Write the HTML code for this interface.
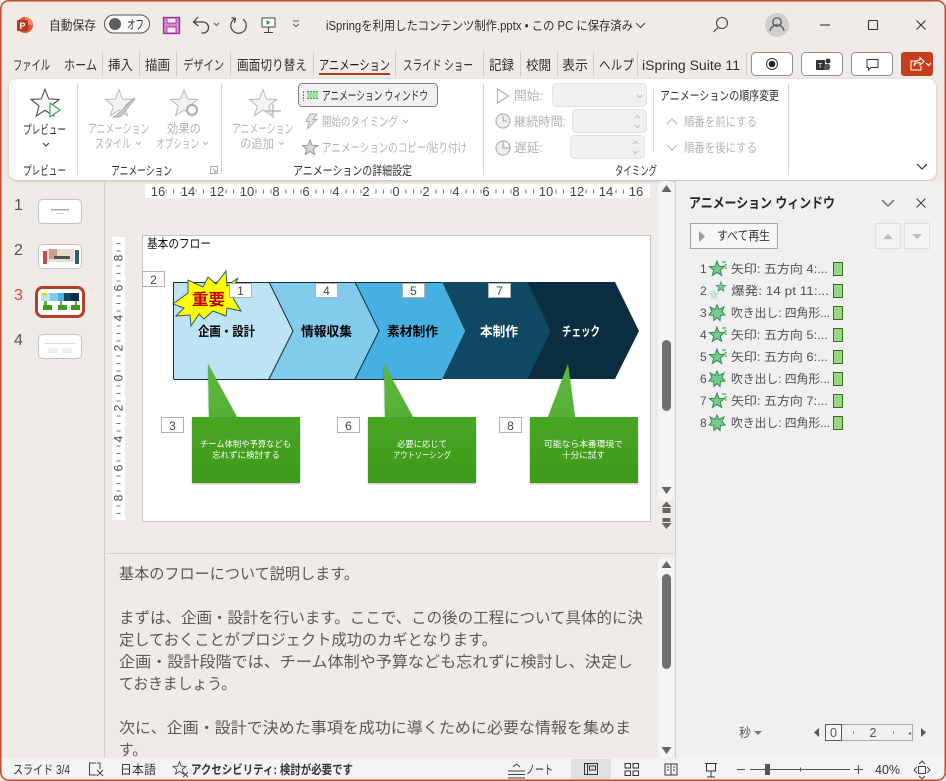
<!DOCTYPE html>
<html lang="ja"><head><meta charset="utf-8"><title>PowerPoint</title>
<style>
html,body{margin:0;padding:0;background:#f0ebe6;overflow:hidden}
svg{display:block}
text{font-family:"Liberation Sans","Noto Sans CJK JP",sans-serif;fill:#303030;font-size:12.5px;white-space:pre}
.g text,text.g{fill:#b4b4b4}
.n text{font-size:15.5px;fill:#5a5a5a}
.r text{font-size:12px;fill:#505050}
.tb text{font-size:13.5px}
</style></head><body>
<svg width="946" height="781" viewBox="0 0 946 781" xmlns="http://www.w3.org/2000/svg">
<defs>
<polygon id="star" points="0,-8 2,-2.75 7.6,-2.47 3.2,1.05 4.7,6.47 0,3.4 -4.7,6.47 -3.2,1.05 -7.6,-2.47 -2,-2.75"/>
<g id="a1"><use href="#star" fill="#79c98d" stroke="#2f8f55" stroke-width="1"/><path d="M5-7h4M7-4h3M8-1h2" stroke="#2f8f55" stroke-width="1"/></g>
<g id="a3"><polygon points="0,-8 2,-3.5 7,-6 5,-1.5 8,2 3.5,2.5 3,7.5 0,4.5 -3,7.5 -3.5,2.5 -8,2 -5,-1.5 -7,-6 -2,-3.5" fill="#79c98d" stroke="#2f8f55" stroke-width="1"/></g>
<linearGradient id="gb" x1="0" y1="0" x2="0" y2="1"><stop offset="0" stop-color="#4fae2e"/><stop offset="1" stop-color="#3f9a19"/></linearGradient>
<linearGradient id="gp" x1="0" y1="0" x2="0" y2="1"><stop offset="0" stop-color="#5fb641"/><stop offset="1" stop-color="#55b035"/></linearGradient>
<filter id="sh" x="-10%" y="-10%" width="120%" height="120%"><feDropShadow dx="0" dy="1" stdDeviation="1" flood-color="#000" flood-opacity=".28"/></filter>
<filter id="rs" x="-3%" y="-10%" width="106%" height="120%"><feDropShadow dx="0" dy="1" stdDeviation="1.5" flood-color="#000" flood-opacity=".22"/></filter>
</defs>

<!-- window -->
<rect width="946" height="781" fill="#f0ebe6"/>

<!-- title bar -->
<circle cx="25" cy="25" r="8" fill="#e0532f"/><path d="M25 17a8 8 0 0 1 8 8h-8z" fill="#ef8a6a"/>
<rect x="17" y="20" width="11" height="11" rx="1" fill="#b7391c"/>
<text x="19.500" y="29" style="fill:#fff;font-size:9px;font-weight:700">P</text>
<text x="49" y="30" textLength="47" lengthAdjust="spacingAndGlyphs" style="font-size:13px">自動保存</text>
<rect x="104.500" y="15" width="45" height="18" rx="9" fill="#fafafa" stroke="#555"/>
<circle cx="115" cy="24" r="6" fill="#5f5f5f"/>
<text x="127" y="29" textLength="17" lengthAdjust="spacingAndGlyphs">オフ</text>
<path d="M163.500 17.500h16v16h-16z" fill="#d08ad0" stroke="#9a2b9a" stroke-width="1.300"/><rect x="167" y="18" width="9" height="5" fill="#f6e6f6" stroke="#9a2b9a" stroke-width=".8"/><rect x="167" y="27" width="9" height="6" fill="#f6e6f6" stroke="#9a2b9a" stroke-width=".8"/>
<path d="M198 17l-4.500 5 5 4M193.500 22h9a5.500 5.500 0 0 1 1 11h-2" fill="none" stroke="#444" stroke-width="1.300"/>
<path d="M214 23l2.500 2.500 2.500-2.500" fill="none" stroke="#555"/>
<path d="M235.500 18.500a7.700 7.700 0 1 0 7.500 .8M231.500 17.500l4 1-1 4.500" fill="none" stroke="#444" stroke-width="1.200"/>
<rect x="262" y="18" width="13" height="9" fill="#fff" stroke="#444"/><path d="M266.500 20v5l4-2.500z" fill="#2f9e44"/><path d="M268.500 27v6M264 32.500h9" stroke="#444" fill="none"/>
<path d="M293 21h6M293 24l3 2.500 3-2.500" fill="none" stroke="#555"/>
<text x="326" y="30" textLength="307" lengthAdjust="spacingAndGlyphs" style="font-size:12.500px">iSpringを利用したコンテンツ制作.pptx • この PC に保存済み</text>
<path d="M636 23l4.500 4.500 4.500-4.500" fill="none" stroke="#444" stroke-width="1.100"/>
<circle cx="722" cy="23" r="5.500" fill="none" stroke="#444" stroke-width="1.100"/><path d="M718 27.500l-4.500 4.500" stroke="#444" stroke-width="1.200"/>
<circle cx="777" cy="25" r="12" fill="#cfcfcf"/><circle cx="777" cy="22" r="4.200" fill="none" stroke="#555" stroke-width="1.200"/><path d="M770 31c1-8 13-8 14 0" fill="none" stroke="#555" stroke-width="1.200"/>
<path d="M820 25h10" stroke="#333" stroke-width="1.100"/>
<rect x="868.500" y="20.500" width="9" height="9" rx="1" fill="none" stroke="#333" stroke-width="1.100"/>
<path d="M916.500 20.500l9 9M925.500 20.500l-9 9" stroke="#333" stroke-width="1.100"/>

<!-- tabs -->
<g class="tb">
<text x="13" y="70" textLength="37" lengthAdjust="spacingAndGlyphs">ファイル</text>
<text x="64" y="70" textLength="33" lengthAdjust="spacingAndGlyphs">ホーム</text>
<text x="108" y="70" textLength="25" lengthAdjust="spacingAndGlyphs">挿入</text>
<text x="145" y="70" textLength="25" lengthAdjust="spacingAndGlyphs">描画</text>
<text x="183" y="70" textLength="41" lengthAdjust="spacingAndGlyphs">デザイン</text>
<text x="237" y="70" textLength="70" lengthAdjust="spacingAndGlyphs">画面切り替え</text>
<text x="319" y="70" textLength="71" lengthAdjust="spacingAndGlyphs" style="fill:#222">アニメーション</text>
<text x="403" y="70" textLength="70" lengthAdjust="spacingAndGlyphs">スライド ショー</text>
<text x="489" y="70" textLength="25" lengthAdjust="spacingAndGlyphs">記録</text>
<text x="526" y="70" textLength="25" lengthAdjust="spacingAndGlyphs">校閲</text>
<text x="562" y="70" textLength="26" lengthAdjust="spacingAndGlyphs">表示</text>
<text x="599" y="70" textLength="35" lengthAdjust="spacingAndGlyphs">ヘルプ</text>
<text x="642" y="70" textLength="98" lengthAdjust="spacingAndGlyphs">iSpring Suite 11</text>
</g>
<rect x="319" y="73" width="71" height="2" fill="#b7391c"/>
<g stroke="#d2cec9" stroke-width="1">
<path d="M102.500 52v24M139.500 52v24M176.500 52v24M230.500 52v24M313.500 52v24M395.500 52v24M483.500 52v24M520.500 52v24M557.500 52v24M593.500 52v24M637.500 52v24M746.500 52v24"/>
</g>
<g fill="#fff" stroke="#8f8f8f"><rect x="751.500" y="52.500" width="41" height="23" rx="4"/><rect x="801.500" y="52.500" width="41" height="23" rx="4"/><rect x="851.500" y="52.500" width="41" height="23" rx="4"/></g>
<circle cx="772" cy="64" r="5.500" fill="none" stroke="#333"/><circle cx="772" cy="64" r="3.300" fill="#222"/>
<rect x="816" y="60" width="9" height="10" rx="1" fill="#333"/><circle cx="828" cy="61" r="2.500" fill="#333"/><rect x="824" y="64" width="6" height="6" rx="2" fill="#555"/><text x="818" y="68" style="font-size:7px;fill:#fff">T</text>
<path d="M867 59.500h11v8h-7l-2.500 2.500v-2.500h-1.500z" fill="none" stroke="#333"/>
<rect x="901" y="52" width="32" height="24" rx="3" fill="#c43e1c"/>
<path d="M918 61h-7v9h10v-4M914 66c0-4 3-6 6-6v-2.500l4 4-4 3.500v-2.500c-3 0-5 1-6 3.500z" fill="none" stroke="#fff" stroke-width="1"/>
<path d="M926 63l2.500 2.500 2.500-2.500" fill="none" stroke="#fff" stroke-width="1.200"/>

<!-- ribbon -->
<rect x="9" y="79" width="927" height="101" rx="8" fill="#fff" filter="url(#rs)"/>
<path d="M77.500 84v90M221.500 84v90M483.500 84v90M653.500 90v62M788.500 84v90" stroke="#d4d4d4"/>

<use href="#star" transform="translate(45 104) scale(1.850)" fill="#fafafa" stroke="#444" stroke-width=".55"/>
<path d="M50 103v14l10-7z" fill="#fff" stroke="#3da35a" stroke-width="1.200"/>
<text x="23" y="134" textLength="43" lengthAdjust="spacingAndGlyphs">プレビュー</text>
<path d="M43 143l3 3 3-3" fill="none" stroke="#333" stroke-width="1.100"/>
<text x="23" y="175" textLength="43" lengthAdjust="spacingAndGlyphs">プレビュー</text>

<g class="g">
<use href="#star" transform="translate(119 104) scale(1.800)" fill="#f3f3f3" stroke="#b8b8b8" stroke-width=".55"/>
<path d="M134 98l-14 14c-2 2-3 3-7 5 5 1 8 0 10-3l12-15z" fill="#c9c9c9" stroke="#aaa" stroke-width=".8"/>
<use href="#star" transform="translate(184 104) scale(1.800)" fill="#f3f3f3" stroke="#b8b8b8" stroke-width=".55"/>
<circle cx="192" cy="110" r="5" fill="#fff" stroke="#b0b0b0" stroke-width="2.200"/>
<use href="#star" transform="translate(263 104) scale(1.800)" fill="#f3f3f3" stroke="#b8b8b8" stroke-width=".55"/>
<path d="M273 104v14M265 111h16" stroke="#b0b0b0" stroke-width="1.200"/>
<text x="88" y="133" textLength="61" lengthAdjust="spacingAndGlyphs">アニメーション</text>
<text x="95" y="148" textLength="36" lengthAdjust="spacingAndGlyphs">スタイル</text>
<path d="M136 142l2.500 2.500 2.500-2.500M203 142l2.500 2.500 2.500-2.500M279 142l2.500 2.500 2.500-2.500M403 120l2.500 2.500 2.500-2.500" fill="none" stroke="#b4b4b4" stroke-width="1.100"/>
<text x="167" y="133" textLength="34" lengthAdjust="spacingAndGlyphs">効果の</text>
<text x="156" y="148" textLength="43" lengthAdjust="spacingAndGlyphs">オプション</text>
<text x="232" y="133" textLength="61" lengthAdjust="spacingAndGlyphs">アニメーション</text>
<text x="240" y="148" textLength="34" lengthAdjust="spacingAndGlyphs">の追加</text>
<path d="M310 114h7l-4 5.500h4l-10 9.500 2.500-7.500h-3.500z" fill="#e3e3e3" stroke="#aaa" stroke-width=".9"/>
<text x="322" y="126" textLength="76" lengthAdjust="spacingAndGlyphs">開始のタイミング</text>
<use href="#star" transform="translate(310 148) scale(1)" fill="#d8d8d8" stroke="#999" stroke-width="1"/>
<text x="322" y="152" textLength="145" lengthAdjust="spacingAndGlyphs">アニメーションのコピー/貼り付け</text>
<path d="M497.500 89v14l11-7z" fill="#fff" stroke="#b4b4b4" stroke-width="1.200"/>
<text x="514" y="100" textLength="29" lengthAdjust="spacingAndGlyphs">開始:</text>
<circle cx="503" cy="121" r="7" fill="#efefef" stroke="#b4b4b4" stroke-width="1.200"/><path d="M503 116v5h4" fill="none" stroke="#a5a5a5"/>
<text x="514" y="126" textLength="52" lengthAdjust="spacingAndGlyphs">継続時間:</text>
<circle cx="503" cy="148" r="7" fill="#efefef" stroke="#b4b4b4" stroke-width="1.200"/><path d="M503 142v6h5M503 141a7 7 0 0 1 7 7h-7z" fill="#fff" stroke="#a5a5a5"/>
<text x="514" y="152" textLength="29" lengthAdjust="spacingAndGlyphs">遅延:</text>
<g fill="#f0f0f0" stroke="#e2e2e2"><rect x="552.500" y="83.500" width="94" height="23" rx="4"/><rect x="572.500" y="109.500" width="74" height="23" rx="4"/><rect x="570.500" y="135.500" width="74" height="23" rx="4"/></g>
<path d="M637 95l2.500 2.500 2.500-2.500M635 118l2.500-2.500 2.500 2.500M635 125l2.500 2.500 2.500-2.500M633 144l2.500-2.500 2.500 2.500M633 151l2.500 2.500 2.500-2.500" fill="none" stroke="#c0c0c0"/>
<path d="M667 124l5-5 5 5M667 145l5 5 5-5" fill="none" stroke="#b8b8b8" stroke-width="1.100"/>
<text x="684" y="126" textLength="73" lengthAdjust="spacingAndGlyphs">順番を前にする</text>
<text x="684" y="152" textLength="73" lengthAdjust="spacingAndGlyphs">順番を後にする</text>
<path d="M210.500 166.500h7v7h-7zM213 169l3 3M216 170v2h-2" fill="none" stroke="#aaa"/>
</g>
<text x="660" y="100" textLength="119" lengthAdjust="spacingAndGlyphs">アニメーションの順序変更</text>
<text x="111" y="175" textLength="61" lengthAdjust="spacingAndGlyphs">アニメーション</text>
<text x="293" y="175" textLength="119" lengthAdjust="spacingAndGlyphs">アニメーションの詳細設定</text>
<text x="615" y="175" textLength="42" lengthAdjust="spacingAndGlyphs">タイミング</text>
<path d="M917 164l5 5 5-5" fill="none" stroke="#333" stroke-width="1.200"/>

<rect x="298.500" y="83.500" width="139" height="23" rx="4" fill="#f0f0f0" stroke="#7d7d7d"/>
<rect x="307" y="92" width="11" height="6" fill="#9fdca8"/><path d="M303.500 91v10M307 91.500h11M307 98.500h11" stroke="#3f9e55" fill="none" stroke-dasharray="2 1"/>
<text x="322" y="100" textLength="106" lengthAdjust="spacingAndGlyphs">アニメーション ウィンドウ</text>

<!-- left pane -->
<path d="M104.500 181v577" stroke="#d2cfcb"/>
<text x="14" y="210" style="font-size:16px;fill:#555">1</text>
<text x="14" y="255" style="font-size:16px;fill:#555">2</text>
<text x="14" y="300" style="font-size:16px;fill:#d9452a">3</text>
<text x="14" y="345" style="font-size:16px;fill:#555">4</text>
<g fill="#fff" stroke="#c4c4c4"><rect x="38.500" y="199.500" width="43" height="24" rx="4"/><rect x="38.500" y="244.500" width="43" height="24" rx="4"/><rect x="38.500" y="334.500" width="43" height="24" rx="4"/></g>
<rect x="51" y="209" width="18" height="1.500" fill="#b5a5a0"/><rect x="56" y="213" width="8" height="1" fill="#c9c9d9"/>
<rect x="46" y="249" width="28" height="13" fill="#e8dccf"/><rect x="49" y="249" width="8" height="10" fill="#c9a184"/><rect x="43" y="251" width="4" height="13" fill="#c0504d"/><rect x="75" y="250" width="4" height="14" fill="#2f5f6f"/><rect x="54" y="256" width="16" height="3" fill="#555"/>
<rect x="44" y="343" width="32" height="1" fill="#ddd"/><rect x="48" y="348" width="10" height="5" fill="#efefef"/><rect x="62" y="348" width="10" height="5" fill="#efefef"/>
<rect x="36.500" y="287.500" width="47" height="29" rx="6" fill="#fff" stroke="#b5402a" stroke-width="3"/>
<rect x="41" y="293" width="10" height="8" fill="#bee3f4"/><rect x="50" y="293" width="9" height="8" fill="#83cbeb"/><rect x="58" y="293" width="7" height="8" fill="#45b0e1"/><rect x="64" y="293" width="8" height="8" fill="#104862"/><rect x="71" y="293" width="8" height="8" fill="#0a2d40"/>
<polygon points="41,295 44,292 47,293 46,296" fill="#f4d800"/>
<rect x="43" y="305" width="9" height="5" fill="#3f9a19"/><rect x="58" y="305" width="9" height="5" fill="#3f9a19"/><rect x="71" y="305" width="9" height="5" fill="#3f9a19"/>
<path d="M44 301h3v4h-3zM60 301h2v4h-2zM75 301h2v4h-2z" fill="#5fb33f"/>

<!-- rulers -->
<rect x="145" y="184" width="505" height="14" fill="#fff"/>
<path d="M158 191.500H636" stroke="#777" stroke-width="4" stroke-dasharray="1 6.500"/>
<g text-anchor="middle">
<g stroke="#fff" stroke-width="3" paint-order="stroke">
<text x="158" y="196" style="font-size:13px;fill:#444">16</text><text x="188" y="196" style="font-size:13px;fill:#444">14</text><text x="217" y="196" style="font-size:13px;fill:#444">12</text><text x="247" y="196" style="font-size:13px;fill:#444">10</text><text x="276" y="196" style="font-size:13px;fill:#444">8</text><text x="306" y="196" style="font-size:13px;fill:#444">6</text><text x="336" y="196" style="font-size:13px;fill:#444">4</text><text x="366" y="196" style="font-size:13px;fill:#444">2</text><text x="396" y="196" style="font-size:13px;fill:#444">0</text><text x="426" y="196" style="font-size:13px;fill:#444">2</text><text x="456" y="196" style="font-size:13px;fill:#444">4</text><text x="486" y="196" style="font-size:13px;fill:#444">6</text><text x="516" y="196" style="font-size:13px;fill:#444">8</text><text x="546" y="196" style="font-size:13px;fill:#444">10</text><text x="577" y="196" style="font-size:13px;fill:#444">12</text><text x="606" y="196" style="font-size:13px;fill:#444">14</text><text x="636" y="196" style="font-size:13px;fill:#444">16</text>
</g></g>
<rect x="112" y="237" width="13" height="283" fill="#fff"/>
<path d="M118.500 243V515" stroke="#777" stroke-width="4" stroke-dasharray="1 6.500"/>
<g text-anchor="middle" stroke="#fff" stroke-width="3" paint-order="stroke">
<text transform="translate(122.500 258) rotate(-90)" style="font-size:12px;fill:#444">8</text>
<text transform="translate(122.500 288) rotate(-90)" style="font-size:12px;fill:#444">6</text>
<text transform="translate(122.500 318) rotate(-90)" style="font-size:12px;fill:#444">4</text>
<text transform="translate(122.500 348) rotate(-90)" style="font-size:12px;fill:#444">2</text>
<text transform="translate(122.500 378) rotate(-90)" style="font-size:12px;fill:#444">0</text>
<text transform="translate(122.500 408) rotate(-90)" style="font-size:12px;fill:#444">2</text>
<text transform="translate(122.500 439) rotate(-90)" style="font-size:12px;fill:#444">4</text>
<text transform="translate(122.500 468) rotate(-90)" style="font-size:12px;fill:#444">6</text>
<text transform="translate(122.500 498) rotate(-90)" style="font-size:12px;fill:#444">8</text>
</g>

<!-- slide -->
<rect x="142.500" y="235.500" width="508" height="286" fill="#fff" stroke="#c6c6c6"/>
<text x="147" y="248" textLength="64" lengthAdjust="spacingAndGlyphs" style="fill:#111">基本のフロー</text>

<polygon points="528,282 615,282 639,331 615,379 528,379 551,331" fill="#0a2d40"/>
<polygon points="442,282 528,282 551,331 528,379 442,379 465,331" fill="#104862"/>
<polygon points="355,282 442,282 465,331 442,379 355,379 379,331" fill="#45b0e1"/>
<polygon points="269,282 355,282 379,331 355,379 269,379 293,331" fill="#83cbeb"/>
<polygon points="173.500,282.500 269,282.500 293,331 269,379 173.500,379" fill="#bee3f4"/>
<path d="M173.500 379V282.500H442M173.500 379.500H442M269 282l24 49-24 48M355 282l24 49-24 48M528 282l23 49-23 48" fill="none" stroke="#10303f" stroke-width="1"/>

<text x="198" y="336" textLength="57" lengthAdjust="spacingAndGlyphs" style="font-size:13px;font-weight:700;fill:#000">企画・設計</text>
<text x="301" y="336" textLength="51" lengthAdjust="spacingAndGlyphs" style="font-size:13px;font-weight:700;fill:#000">情報収集</text>
<text x="387" y="336" textLength="51" lengthAdjust="spacingAndGlyphs" style="font-size:13px;font-weight:700;fill:#000">素材制作</text>
<text x="480" y="336" textLength="38" lengthAdjust="spacingAndGlyphs" style="font-size:13px;font-weight:700;fill:#fff">本制作</text>
<text x="562" y="336" textLength="38" lengthAdjust="spacingAndGlyphs" style="font-size:13px;font-weight:700;fill:#fff">チェック</text>

<polygon points="173,304 188,293 188,280 203,287 208,277 216,284 226,271 227,286 238,278 230,293 241,311 227,308 226,316 213,311 204,319 199,314 191,326 190,315 176,316 184,308" fill="#ffff00" stroke="#2f5a68" stroke-width="1"/>
<text x="192" y="305" textLength="33" lengthAdjust="spacingAndGlyphs" style="font-size:16px;font-weight:700;fill:#c00000">重要</text>

<g filter="url(#sh)">
<path d="M192 417h17l-1-53 29 53h63v66H192z" fill="url(#gb)"/>
<path d="M368 417h17l-1-53 29 53h63v66H368z" fill="url(#gb)"/>
<path d="M530 417h18l20-53 7 53h63v66H530z" fill="url(#gb)"/>
</g>
<path d="M209 417l-1-53 29 53zM385 417l-1-53 29 53zM548 417l20-53 7 53z" fill="url(#gp)"/>
<text x="200" y="447" textLength="91" lengthAdjust="spacingAndGlyphs" style="font-size:8.500px;fill:#fff">チーム体制や予算なども</text>
<text x="212" y="458" textLength="68" lengthAdjust="spacingAndGlyphs" style="font-size:8.500px;fill:#fff">忘れずに検討する</text>
<text x="397" y="447" textLength="50" lengthAdjust="spacingAndGlyphs" style="font-size:8.500px;fill:#fff">必要に応じて</text>
<text x="393" y="458" textLength="58" lengthAdjust="spacingAndGlyphs" style="font-size:8.500px;fill:#fff">アウトソーシング</text>
<text x="544" y="447" textLength="79" lengthAdjust="spacingAndGlyphs" style="font-size:8.500px;fill:#fff">可能なら本番環境で</text>
<text x="562" y="458" textLength="43" lengthAdjust="spacingAndGlyphs" style="font-size:8.500px;fill:#fff">十分に試す</text>

<g fill="#fff" stroke="#b0b0b0">
<rect x="142.500" y="271.500" width="22" height="15"/><rect x="229.500" y="283.500" width="22" height="14"/><rect x="315.500" y="283.500" width="22" height="14"/><rect x="402.500" y="283.500" width="22" height="14"/><rect x="488.500" y="283.500" width="22" height="14"/>
<rect x="161.500" y="417.500" width="22" height="15"/><rect x="337.500" y="417.500" width="22" height="15"/><rect x="499.500" y="417.500" width="22" height="15"/>
</g>
<g text-anchor="middle">
<text x="153.500" y="284" style="font-size:12px;fill:#444">2</text><text x="240.500" y="295" style="font-size:12px;fill:#444">1</text><text x="326.500" y="295" style="font-size:12px;fill:#444">4</text><text x="413.500" y="295" style="font-size:12px;fill:#444">5</text><text x="499.500" y="295" style="font-size:12px;fill:#444">7</text><text x="172.500" y="430" style="font-size:12px;fill:#444">3</text><text x="348.500" y="430" style="font-size:12px;fill:#444">6</text><text x="510.500" y="430" style="font-size:12px;fill:#444">8</text>
</g>

<!-- slide scrollbar -->
<rect x="658" y="181" width="16" height="320" rx="6" fill="#f5f5f5"/>
<rect x="662" y="340" width="9" height="71" rx="4.500" fill="#707070"/>
<path d="M661.500 192l5-7 5 7zM661.500 487h10l-5 7z" fill="#666"/>
<path d="M661.500 507l5-5.500 5 5.500zM662.500 508h8v5h-8zM662.500 518h8v4h-8zM661.500 523h10l-5 6z" fill="#666"/>

<!-- notes -->
<path d="M106 553.500h569" stroke="#d8d5d1"/>
<g class="n">
<text x="119" y="579" textLength="240" lengthAdjust="spacingAndGlyphs">基本のフローについて説明します。</text>
<text x="119" y="623" textLength="524" lengthAdjust="spacingAndGlyphs">まずは、企画・設計を行います。ここで、この後の工程について具体的に決</text>
<text x="119" y="645" textLength="378" lengthAdjust="spacingAndGlyphs">定しておくことがプロジェクト成功のカギとなります。</text>
<text x="119" y="667" textLength="514" lengthAdjust="spacingAndGlyphs">企画・設計段階では、チーム体制や予算なども忘れずに検討し、決定し</text>
<text x="119" y="689" textLength="117" lengthAdjust="spacingAndGlyphs">ておきましょう。</text>
<text x="119" y="733" textLength="512" lengthAdjust="spacingAndGlyphs">次に、企画・設計で決めた事項を成功に導くために必要な情報を集めま</text>
<text x="119" y="755" textLength="28" lengthAdjust="spacingAndGlyphs">す。</text>
</g>
<rect x="658" y="558" width="16" height="200" rx="6" fill="#f5f5f5"/>
<rect x="662" y="574" width="9" height="95" rx="4.500" fill="#707070"/>
<path d="M661.500 568l5-7 5 7zM661.500 747h10l-5 7z" fill="#666"/>

<!-- right pane -->
<rect x="676" y="181" width="268" height="577" fill="#f0f0f0"/>
<path d="M675.500 181v577" stroke="#d6d3cf"/>
<text x="689" y="208" textLength="146" lengthAdjust="spacingAndGlyphs" style="font-size:14px;font-weight:700;fill:#262626">アニメーション ウィンドウ</text>
<path d="M882 200l6 6 6-6M916.500 198.500l9 9M925.500 198.500l-9 9" fill="none" stroke="#444" stroke-width="1.100"/>
<rect x="690.500" y="223.500" width="87" height="25" fill="#f6f6f6" stroke="#a6a6a6"/>
<path d="M699 231v11l6-5.500z" fill="#9a9a9a"/>
<text x="717" y="240" textLength="53" lengthAdjust="spacingAndGlyphs" style="fill:#333">すべて再生</text>
<g fill="#f3f3f3" stroke="#dfdfdf"><rect x="875.500" y="223.500" width="25" height="25"/><rect x="904.500" y="223.500" width="25" height="25"/></g>
<path d="M883 239l5-5 5 5zM912 234l5 5 5-5z" fill="#bdbdbd"/>

<g class="r">
<text x="700" y="273">1</text><use href="#a1" x="717" y="269"/><text x="731" y="273" textLength="97" lengthAdjust="spacingAndGlyphs">矢印: 五方向 4:...</text>
<text x="700" y="295">2</text><use href="#star" transform="translate(721 287) scale(.65)" fill="#79c98d" stroke="#2f8f55"/><use href="#star" transform="translate(714 295) scale(.65)" fill="#c8e8d0" stroke="#bfe0c8"/><text x="731" y="295" textLength="98" lengthAdjust="spacingAndGlyphs">爆発: 14 pt 11:...</text>
<text x="700" y="317">3</text><use href="#a3" x="717" y="313"/><text x="731" y="317" textLength="99" lengthAdjust="spacingAndGlyphs">吹き出し: 四角形...</text>
<text x="700" y="339">4</text><use href="#a1" x="717" y="335"/><text x="731" y="339" textLength="97" lengthAdjust="spacingAndGlyphs">矢印: 五方向 5:...</text>
<text x="700" y="361">5</text><use href="#a1" x="717" y="357"/><text x="731" y="361" textLength="97" lengthAdjust="spacingAndGlyphs">矢印: 五方向 6:...</text>
<text x="700" y="383">6</text><use href="#a3" x="717" y="379"/><text x="731" y="383" textLength="99" lengthAdjust="spacingAndGlyphs">吹き出し: 四角形...</text>
<text x="700" y="405">7</text><use href="#a1" x="717" y="401"/><text x="731" y="405" textLength="97" lengthAdjust="spacingAndGlyphs">矢印: 五方向 7:...</text>
<text x="700" y="427">8</text><use href="#a3" x="717" y="423"/><text x="731" y="427" textLength="99" lengthAdjust="spacingAndGlyphs">吹き出し: 四角形...</text>
</g>
<g fill="#9ad782" stroke="#3c6e22"><rect x="833.500" y="262.500" width="9" height="13"/><rect x="833.500" y="284.500" width="9" height="13"/><rect x="833.500" y="306.500" width="9" height="13"/><rect x="833.500" y="328.500" width="9" height="13"/><rect x="833.500" y="350.500" width="9" height="13"/><rect x="833.500" y="372.500" width="9" height="13"/><rect x="833.500" y="394.500" width="9" height="13"/><rect x="833.500" y="416.500" width="9" height="13"/></g>

<text x="739" y="737" textLength="12" lengthAdjust="spacingAndGlyphs" style="fill:#555">秒</text>
<path d="M754 731l4 4 4-4z" fill="#777"/>
<path d="M819 728v9l-5-4.500zM921 728v9l5-4.500z" fill="#555"/>
<rect x="825.500" y="724.500" width="87" height="16" fill="#f0f0f0" stroke="#a9a9a9"/>
<rect x="825.500" y="724.500" width="16" height="16" fill="#f7f7f7" stroke="#555"/>
<text x="833.500" y="737" text-anchor="middle" style="fill:#555">0</text>
<text x="873" y="737" text-anchor="middle" style="fill:#555">2</text>
<path d="M853.500 731v3M893.500 731v3" stroke="#999"/>
<path d="M911 732l-3 1.500 3 1.500z" fill="#666"/>

<!-- status bar -->
<rect x="2" y="758" width="942" height="21" fill="#f3f3f3"/>
<rect x="571" y="759" width="40" height="20" fill="#e0e0e0"/>
<text x="13" y="774" textLength="57" lengthAdjust="spacingAndGlyphs" style="font-size:12.500px;fill:#333">スライド 3/4</text>
<text x="120" y="774" textLength="36" lengthAdjust="spacingAndGlyphs" style="font-size:12.500px;fill:#333">日本語</text>
<text x="191" y="774" textLength="162" lengthAdjust="spacingAndGlyphs" style="font-size:12.500px;font-weight:700;fill:#333">アクセシビリティ: 検討が必要です</text>
<text x="526" y="774" textLength="27" lengthAdjust="spacingAndGlyphs" style="fill:#333">ノート</text>
<text x="875" y="774" textLength="25" lengthAdjust="spacingAndGlyphs" style="font-size:12.500px;fill:#333">40%</text>
<path d="M96 763h-6.500v12h7M97 763h3v6M97 770l6 6M103 770l-6 6" fill="none" stroke="#444"/>
<use href="#star" transform="translate(179.500 768.500) scale(.85)" fill="none" stroke="#444"/>
<path d="M183 772l5 5M188 772l-5 5" stroke="#444"/>
<path d="M508 771h17M508 774.500h17M508 778h17M513 767l3.500-3 3.500 3" fill="none" stroke="#444"/>
<rect x="584.500" y="763.500" width="13" height="11" fill="none" stroke="#333"/><path d="M587.500 764v10" stroke="#333"/><rect x="589.500" y="766" width="6" height="4" fill="none" stroke="#333"/>
<g fill="none" stroke="#333"><rect x="625" y="763.500" width="5.500" height="4.500"/><rect x="633" y="763.500" width="5.500" height="4.500"/><rect x="625" y="771" width="5.500" height="4.500"/><rect x="633" y="771" width="5.500" height="4.500"/></g>
<path d="M665 764h12v11h-12zM671 764v11M667 767h2M667 770h2M673 767h2M673 770h2" fill="none" stroke="#333"/>
<path d="M705 763.500h12M706.500 764v7h9v-7M711 771v6M707 777h8" fill="none" stroke="#333"/>
<path d="M737 769.500h8M750 769.500h100M854 769.500h9M858.500 765v9" stroke="#555"/>
<path d="M800.500 767.500v4" stroke="#555"/>
<rect x="765" y="764" width="5" height="11" fill="#555"/>
<path d="M918.500 766.500h7v7h-7zM919 764l3-3 3 3M919 776l3 3 3-3M917 767l-3 3 3 3M927 767l3 3-3 3" fill="none" stroke="#444"/>

<!-- window frame -->
<rect x=".75" y=".75" width="944.500" height="779.500" rx="8" fill="none" stroke="#c8492a" stroke-width="1.500"/>
</svg>
</body></html>
